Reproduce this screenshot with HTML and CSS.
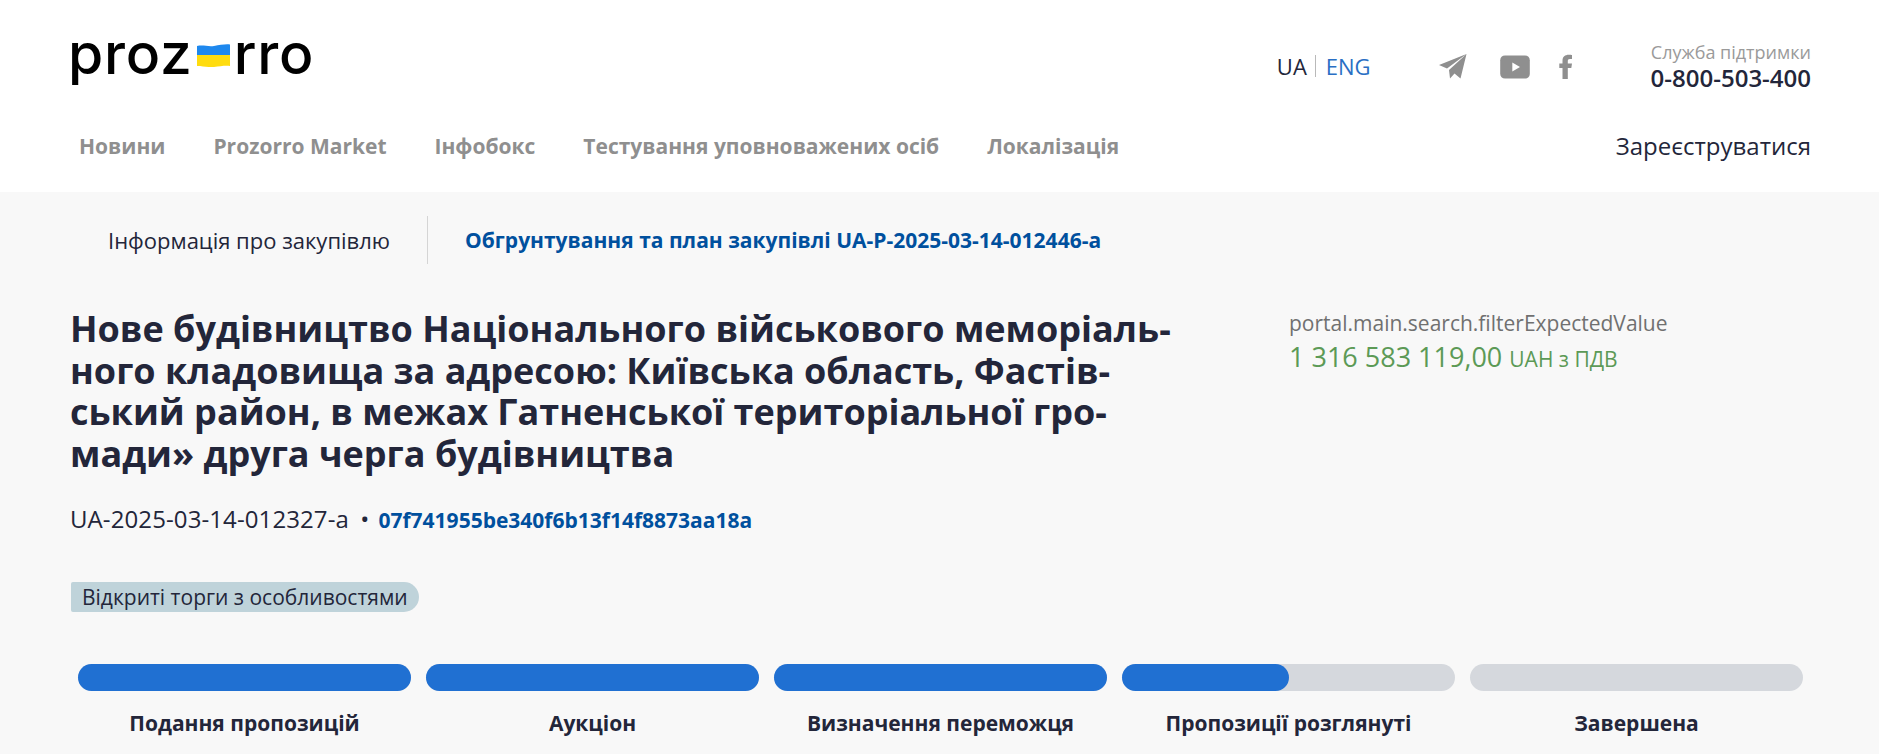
FILE: index.html
```html
<!DOCTYPE html>
<html lang="uk">
<head>
  <meta charset="UTF-8" />
  <meta name="viewport" content="width=device-width, initial-scale=1.0" />
  <title>Prozorro</title>
  <link rel="stylesheet" href="styles.css">
</head>
<body>
  <header class="site-header">
    <div class="top-row">
      <a class="logo" href="#">proz<svg class="logo-flag" viewBox="0 0 33 23" aria-hidden="true"><path d="M0 2c6-1.500 11 1 17 0s11-2 16-1.500V11H0z" fill="#1e88ee"/><path d="M0 11h33v11c-6-.5-10 .5-16 1S6 22 0 22z" fill="#ffdc0f"/></svg>rro</a>
      <div class="top-right">
        <div class="lang"><span class="lang-current">UA</span><a href="#" class="lang-link">ENG</a></div>
        <div class="socials">
          <svg class="icon-telegram" viewBox="0 0 28 25" aria-hidden="true"><path d="M27.500 0 0 11 8 14.500zM27.500 0 10 16 11 24.500 15.500 19.500 21.500 24.500z" fill="#8f8f8f"/></svg>
          <svg class="icon-youtube" viewBox="0 0 30 24" aria-hidden="true"><path d="M5 .5h20c2.800 0 4.800 2 4.800 4.800v13.400c0 2.800-2 4.800-4.800 4.800H5c-2.800 0-4.800-2-4.800-4.800V5.300C.2 2.500 2.200.5 5 .5z" fill="#8f8f8f"/><path d="M12.300 7.500 20 12l-7.700 4.500z" fill="#fff"/></svg>
          <svg class="icon-facebook" viewBox="0 0 13 25" aria-hidden="true"><path d="M8.800 25V14h3.500l.7-4.500H8.800V7.200c0-1.300.5-2.200 2.200-2.200h2V.9C12.500.8 11.300.7 9.800.7 6 .7 3.500 2.800 3.500 6.600v2.900H.3V14h3.200v11z" fill="#8f8f8f"/></svg>
        </div>
        <div class="support">
          <div class="support-label">Служба підтримки</div>
          <div class="support-phone">0-800-503-400</div>
        </div>
      </div>
    </div>
    <nav class="main-nav">
      <ul class="nav-list">
        <li><a href="#">Новини</a></li>
        <li><a href="#">Prozorro Market</a></li>
        <li><a href="#">Інфобокс</a></li>
        <li><a href="#">Тестування уповноважених осіб</a></li>
        <li><a href="#">Локалізація</a></li>
      </ul>
      <a class="register" href="#">Зареєструватися</a>
    </nav>
  </header>

  <main class="content">
    <div class="tabs">
      <div class="tab">Інформація про закупівлю</div>
      <a class="tab tab-link" href="#">Обгрунтування та план закупівлі UA-P-2025-03-14-012446-a</a>
    </div>

    <section class="tender">
      <div class="tender-main">
        <h1 class="tender-title">Нове будівництво Національного військового меморіаль&shy;ного кладовища за адресою: Київська область, Фастів&shy;ський район, в межах Гатненської територіальної гро&shy;мади» друга черга будівництва</h1>
        <div class="tender-ids">
          <span class="tender-id">UA-2025-03-14-012327-a</span>
          <span class="dot">•</span>
          <a href="#" class="tender-hash">07f741955be340f6b13f14f8873aa18a</a>
        </div>
        <span class="tag">Відкриті торги з особливостями</span>
      </div>
      <aside class="tender-value">
        <div class="value-label">portal.main.search.filterExpectedValue</div>
        <div class="value-sum">1 316 583 119,00 <span class="value-currency">UAH з ПДВ</span></div>
      </aside>
    </section>

    <ol class="stages">
      <li class="stage">
        <div class="bar"><div class="bar-fill bar-full"></div></div>
        <div class="stage-name">Подання пропозицій</div>
      </li>
      <li class="stage">
        <div class="bar"><div class="bar-fill bar-full"></div></div>
        <div class="stage-name">Аукціон</div>
      </li>
      <li class="stage">
        <div class="bar"><div class="bar-fill bar-full"></div></div>
        <div class="stage-name">Визначення переможця</div>
      </li>
      <li class="stage">
        <div class="bar"><div class="bar-fill" style="width: 50%"></div></div>
        <div class="stage-name">Пропозиції розглянуті</div>
      </li>
      <li class="stage">
        <div class="bar"></div>
        <div class="stage-name">Завершена</div>
      </li>
    </ol>
  </main>
</body>
</html>
```

FILE: styles.css
```css
* {
  box-sizing: border-box;
}
html, body {
  height: 100%;
}
body {
  margin: 0;
  font-family: "Open Sans", sans-serif;
  background-color: #f8f8f8;
  color: #23263a;
  overflow: hidden;
}
a {
  text-decoration: none;
}
.site-header {
  background-color: #fff;
  height: 192px;
  padding: 0 68px 0 70px;
}
.top-row {
  display: flex;
  justify-content: space-between;
  align-items: flex-start;
  height: 122px;
}
.logo {
  display: flex;
  align-items: center;
  margin-top: 22px;
  margin-left: -2px;
  font-family: "Inter", sans-serif;
  font-size: 57px;
  line-height: 64px;
  font-weight: 500;
  letter-spacing: 0.8px;
  color: #000;
}
.logo-flag {
  width: 33px;
  height: 23px;
  margin: 3px 4px 0 4px;
}
.top-right {
  display: flex;
  align-items: flex-start;
  margin-top: 41px;
}
.lang {
  display: flex;
  align-items: center;
  font-size: 22px;
  line-height: 26px;
  margin-top: 12px;
}
.lang-current {
  padding-right: 8px;
  border-right: 1px solid #b9b9b9;
  line-height: 22px;
}
.lang-link {
  color: #2a6fc4;
  padding-left: 10px;
}
.socials {
  display: flex;
  align-items: center;
  margin: 13px 0 0 68px;
}
.icon-telegram {
  width: 28px;
  height: 25px;
}
.icon-youtube {
  width: 30px;
  height: 24px;
  margin-left: 33px;
}
.icon-facebook {
  width: 13px;
  height: 25px;
  margin-left: 29px;
}
.support {
  margin-left: 79px;
  text-align: right;
}
.support-label {
  font-size: 18px;
  line-height: 22px;
  color: #9a9a9a;
}
.support-phone {
  font-size: 24px;
  line-height: 30px;
  font-weight: 600;
}
.main-nav {
  display: flex;
  justify-content: space-between;
  align-items: center;
  height: 48px;
}
.nav-list {
  display: flex;
  gap: 48px;
  list-style: none;
  margin: 0;
  padding: 0 0 0 9px;
}
.nav-list a {
  font-size: 21px;
  font-weight: 700;
  color: #8f8f8f;
}
.register {
  font-size: 24px;
  line-height: 30px;
  color: #23263a;
}
.content {
  padding: 24px 68px 0 70px;
}
.tabs {
  display: flex;
  align-items: center;
  height: 48px;
  font-size: 22px;
}
.tab {
  padding: 0 37px 0 38px;
  line-height: 48px;
}
.tab-link {
  padding-left: 37px;
  border-left: 1px solid #d5d5d5;
  font-size: 21px;
  font-weight: 700;
  color: #00509e;
}
.tender {
  display: flex;
  margin-top: 44px;
}
.tender-main {
  width: 1219px;
}
.tender-title {
  margin: 0;
  width: 1125px;
  font-size: 36px;
  line-height: 41.500px;
  font-weight: 700;
  hyphens: manual;
}
.tender-ids {
  margin-top: 29px;
  font-size: 24px;
  line-height: 32px;
}
.tender-id {
  letter-spacing: 0.1px;
}
.dot {
  margin: 0 3px 0 5px;
}
.tender-hash {
  font-size: 21px;
  font-weight: 700;
  color: #00509e;
}
.tag {
  display: inline-block;
  margin: 46px 0 0 1px;
  padding: 0 11px;
  font-size: 21px;
  line-height: 30px;
  background-color: #bfd3da;
  border-radius: 2px 15px 15px 2px;
}
.value-label {
  margin-top: 1px;
  font-size: 21px;
  line-height: 28px;
  color: #707070;
}
.value-sum {
  font-size: 27px;
  line-height: 40px;
  color: #5c9a56;
}
.value-currency {
  font-size: 21px;
}
.stages {
  display: grid;
  grid-template-columns: repeat(5, 333px);
  gap: 15px;
  list-style: none;
  margin: 52px 0 0 8px;
  padding: 0;
}
.bar {
  height: 27px;
  background-color: #d5d8dd;
  border-radius: 14px;
}
.bar-fill {
  height: 100%;
  background-color: #2070d2;
  border-radius: 14px;
}
.bar-full {
  width: 100%;
}
.stage-name {
  margin-top: 18px;
  font-size: 21px;
  line-height: 28px;
  font-weight: 700;
  text-align: center;
}
```
